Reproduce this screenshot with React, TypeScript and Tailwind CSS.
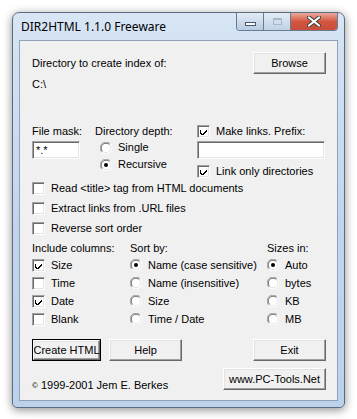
import React from 'react';

const font = "font-['Liberation_Sans',Arial,sans-serif] text-[11px] text-black whitespace-nowrap";

function Btn({ children, w, isDefault }: { children: React.ReactNode; w: string; isDefault?: boolean }) {
  if (isDefault) {
    return (
      <div className={`${w} h-[22px] border border-black`}>
        <div className="w-full h-full flex items-center justify-center border border-t-white border-l-white border-r-[#696969] border-b-[#696969] shadow-[inset_-1px_-1px_0_#a0a0a0,inset_1px_1px_0_#e3e3e3] bg-[#f0f0f0]">
          {children}
        </div>
      </div>
    );
  }
  return (
    <div className={`${w} h-[22px] flex items-center justify-center border border-t-white border-l-white border-r-[#696969] border-b-[#696969] shadow-[inset_-1px_-1px_0_#a0a0a0,inset_1px_1px_0_#e3e3e3] bg-[#f0f0f0]`}>
      {children}
    </div>
  );
}

function Sunken({ w, children }: { w: string; children?: React.ReactNode }) {
  return (
    <div className={`${w} h-[18px] bg-white border border-t-[#a0a0a0] border-l-[#a0a0a0] border-r-white border-b-white shadow-[inset_1px_1px_0_#696969,inset_-1px_-1px_0_#e3e3e3] px-[3px] leading-[16px]`}>
      {children}
    </div>
  );
}

function Check({ checked, label, h = 'h-[20px]' }: { checked?: boolean; label: string; h?: string }) {
  return (
    <div className={`flex items-center ${h}`}>
      <span className="w-[13px] h-[13px] bg-white border border-t-[#a0a0a0] border-l-[#a0a0a0] border-r-white border-b-white shadow-[inset_1px_1px_0_#696969,inset_-1px_-1px_0_#e3e3e3] flex items-center justify-center">
        {checked && (
          <svg width="7" height="7" viewBox="0 0 7 7" shapeRendering="crispEdges">
            <path d="M0 2h1v3h1v1h1v-1h1v-1h1v-1h1v-1h1v2h-1v1h-1v1h-1v1h-1v1h-1v-1h-1v-1h-1z" fill="#000" />
          </svg>
        )}
      </span>
      <span className="ml-[6px]">{label}</span>
    </div>
  );
}

function Radio({ checked, label, h = 'h-[18px]' }: { checked?: boolean; label: string; h?: string }) {
  return (
    <div className={`flex items-center ${h}`}>
      <svg width="12" height="12" viewBox="0 0 12 12">
        <circle cx="6" cy="6" r="5.5" fill="#fff" />
        <path d="M1.8 10.2A5.5 5.5 0 0 1 10.2 1.8" fill="none" stroke="#a0a0a0" strokeWidth="1" />
        <path d="M2.6 9.4A4.5 4.5 0 0 1 9.4 2.6" fill="none" stroke="#696969" strokeWidth="1" />
        <path d="M10.2 1.8A5.5 5.5 0 0 1 1.8 10.2" fill="none" stroke="#fff" strokeWidth="1" />
        <path d="M9.4 2.6A4.5 4.5 0 0 1 2.6 9.4" fill="none" stroke="#e3e3e3" strokeWidth="1" />
        {checked && <circle cx="6" cy="6" r="2" fill="#000" />}
      </svg>
      <span className="ml-[6px]">{label}</span>
    </div>
  );
}

export default function App() {
  return (
    <div className="w-[357px] h-[419px] bg-white pl-[12px] pt-[12px]">
      <div className="w-[333px] h-[396px] rounded-t-[7px] rounded-b-[5px] border border-[#5b6b80] bg-gradient-to-b from-[#d7e5f4] via-[#c1d6ee] to-[#bcd2ea] shadow-[0_2px_10px_rgba(0,0,0,0.45)] flex flex-col">
        {/* Title bar */}
        <div className="h-[27px] flex justify-between pl-[8px] pr-[6px]">
          <span className="self-center font-['Noto_Sans',sans-serif] text-[12px] text-black">DIR2HTML 1.1.0 Freeware</span>
          <div className="flex h-[18px] rounded-b-[4px] border border-t-0 border-[#6a7b92] overflow-hidden">
            <div className="w-[27px] h-full flex items-center justify-center bg-gradient-to-b from-[#e3ecf6] to-[#b7cbe2] border-r border-[#6a7b92]">
              <span className="w-[11px] h-[4px] bg-white border border-[#4a5568] mt-[4px]" />
            </div>
            <div className="w-[27px] h-full flex items-center justify-center bg-gradient-to-b from-[#e3ecf6] to-[#bfd1e6] border-r border-[#6a7b92]">
              <span className="w-[9px] h-[7px] border border-[#a8b6c7] shadow-[inset_0_1px_0_#a8b6c7]" />
            </div>
            <div className="w-[46px] h-full flex items-center justify-center bg-gradient-to-b from-[#e9a99c] via-[#d2553f] to-[#c84e3a]">
              <svg width="14" height="11" viewBox="0 0 14 11">
                <path d="M2 1.5L12 9.5M12 1.5L2 9.5" stroke="#3d3d3d" strokeWidth="4" strokeLinecap="round" />
                <path d="M2 1.5L12 9.5M12 1.5L2 9.5" stroke="#fff" strokeWidth="2.2" strokeLinecap="round" />
              </svg>
            </div>
          </div>
        </div>

        {/* Client area */}
        <div className="mx-[6px] h-[361px] border border-[#8ea3bb] bg-[#f0f0f0]">
          <div className={`${font} w-full h-full flex flex-col pl-[12px] pr-[11px]`}>
            <div className="flex justify-between items-center mt-[11px]">
              <span>Directory to create index of:</span>
              <Btn w="w-[73px]">Browse</Btn>
            </div>
            <div className="h-[12px] leading-[12px] mt-[4px]">C:\</div>

            <div className="flex mt-[34px]">
              <div className="w-[63px] flex flex-col">
                <span className="h-[14px] leading-[14px]">File mask:</span>
                <div className="mt-[3px]">
                  <Sunken w="w-[48px]">*.*</Sunken>
                </div>
              </div>
              <div className="w-[102px] flex flex-col">
                <span className="h-[14px] leading-[14px]">Directory depth:</span>
                <div className="mt-[1px] pl-[5px]">
                  <Radio label="Single" h="h-[17px]" />
                  <Radio checked label="Recursive" h="h-[17px]" />
                </div>
              </div>
              <div className="flex flex-col">
                <Check checked label="Make links. Prefix:" h="h-[14px]" />
                <div className="mt-[3px]">
                  <Sunken w="w-[128px]" />
                </div>
                <div className="mt-[5px]">
                  <Check checked label="Link only directories" h="h-[14px]" />
                </div>
              </div>
            </div>

            <div className="flex flex-col">
              <Check label="Read <title> tag from HTML documents" />
              <Check label="Extract links from .URL files" />
              <Check label="Reverse sort order" />
            </div>

            <div className="flex mt-[3px]">
              <div className="w-[98px] flex flex-col">
                <span className="h-[14px] leading-[14px]">Include columns:</span>
                <div className="mt-[1px]">
                  <Check checked label="Size" h="h-[18px]" />
                  <Check label="Time" h="h-[18px]" />
                  <Check checked label="Date" h="h-[18px]" />
                  <Check label="Blank" h="h-[18px]" />
                </div>
              </div>
              <div className="w-[137px] flex flex-col">
                <span className="h-[14px] leading-[14px]">Sort by:</span>
                <div className="mt-[1px]">
                  <Radio checked label="Name (case sensitive)" />
                  <Radio label="Name (insensitive)" />
                  <Radio label="Size" />
                  <Radio label="Time / Date" />
                </div>
              </div>
              <div className="flex flex-col">
                <span className="h-[14px] leading-[14px]">Sizes in:</span>
                <div className="mt-[1px]">
                  <Radio checked label="Auto" />
                  <Radio label="bytes" />
                  <Radio label="KB" />
                  <Radio label="MB" />
                </div>
              </div>
            </div>

            <div className="flex justify-between mt-[11px]">
              <div className="flex gap-[8px]">
                <Btn w="w-[69px]" isDefault>Create HTML</Btn>
                <Btn w="w-[73px]">Help</Btn>
              </div>
              <Btn w="w-[73px]">Exit</Btn>
            </div>

            <div className="flex justify-between mt-[7px]">
              <span className="mt-[10px] h-[14px] leading-[14px]">
                <span className="text-[8px] align-[1px]">©</span> 1999-2001 Jem E. Berkes
              </span>
              <Btn w="w-[103px]">www.PC-Tools.Net</Btn>
            </div>
          </div>
        </div>
      </div>
    </div>
  );
}
